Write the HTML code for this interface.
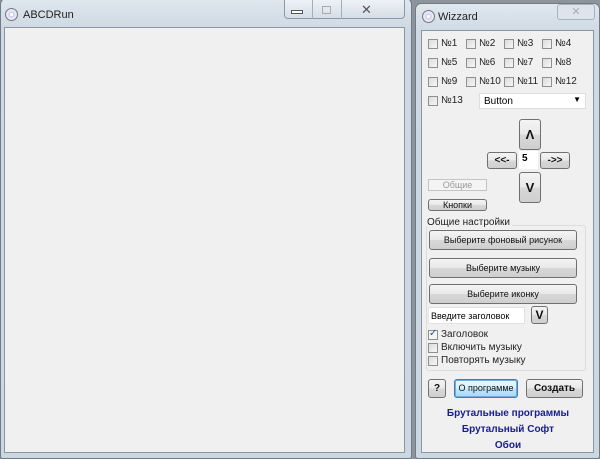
<!DOCTYPE html>
<html><head><meta charset="utf-8"><style>
*{box-sizing:border-box;margin:0;padding:0}
body{width:600px;height:459px;background:#8d949b;position:relative;overflow:hidden;font-family:"Liberation Sans",sans-serif;font-size:10px;color:#000}
.a{position:absolute}
.frame{background:linear-gradient(#dfe7ef,#cfd9e3 30px,#cdd7e1);border:1px solid #707b86;border-radius:6px 6px 3px 3px}
.client{background:#f0f0f0;border:1px solid #8a96a2}
.btn{position:absolute;border:1px solid #707070;border-radius:3px;background:linear-gradient(#f4f4f4,#e8e8e8 50%,#d8d8d8 51%,#cfcfcf);text-align:center;font-size:10px;color:#111}
.cb{position:absolute;width:10px;height:10px;border:1px solid #8e8f8f;background:linear-gradient(135deg,#dcdcdc,#f6f6f6)}
.lbl{position:absolute;font-size:10px;color:#222}
.lnk{position:absolute;left:422px;width:172px;text-align:center;color:#1a2090;font-weight:bold;font-size:10px}
.ico{position:absolute;width:13px;height:13px;border-radius:50%;border:1px solid #777;background:radial-gradient(#fff 20%,#c8cde8 22%,#eef 60%,#aab 100%)}
.sm{font-size:9px}
</style></head><body>
<div class="a frame" style="left:0;top:-2px;width:412px;height:461px"></div>
<div class="ico" style="left:5px;top:8px"></div>
<div class="lbl" style="left:23px;top:9px;font-size:11px">ABCDRun</div>
<div class="a" style="left:284px;top:0;width:121px;height:19px;border:1px solid #8c98a6;border-top:none;border-radius:0 0 4px 4px;background:linear-gradient(#eef2f6,#d5dde6)"></div>
<div class="a" style="left:312px;top:0;width:1px;height:19px;background:#a4aeb9"></div>
<div class="a" style="left:341px;top:0;width:1px;height:19px;background:#a4aeb9"></div>
<div class="a" style="left:291px;top:10px;width:12px;height:4px;border:1px solid #555;background:#fff"></div>
<div class="a" style="left:322px;top:6px;width:9px;height:8px;border:1px solid #aaa"></div>
<div class="a" style="left:361px;top:2px;color:#555;font-size:13px">✕</div>
<div class="a client" style="left:4px;top:27px;width:401px;height:426px"></div>
<div class="a frame" style="left:415px;top:3px;width:185px;height:456px"></div>
<div class="ico" style="left:422px;top:10px"></div>
<div class="lbl" style="left:438px;top:11px;font-size:11px">Wizzard</div>
<div class="a" style="left:557px;top:4px;width:38px;height:16px;border:1px solid #a8b2bd;border-radius:3px;background:#dde4ec;color:#aab;text-align:center;font-size:11px">✕</div>
<div class="a client" style="left:421px;top:30px;width:173px;height:423px"></div>

<div class="cb" style="left:428px;top:39px"></div><div class="lbl" style="left:441px;top:38px">№1</div>
<div class="cb" style="left:466px;top:39px"></div><div class="lbl" style="left:479px;top:38px">№2</div>
<div class="cb" style="left:504px;top:39px"></div><div class="lbl" style="left:517px;top:38px">№3</div>
<div class="cb" style="left:542px;top:39px"></div><div class="lbl" style="left:555px;top:38px">№4</div>
<div class="cb" style="left:428px;top:58px"></div><div class="lbl" style="left:441px;top:57px">№5</div>
<div class="cb" style="left:466px;top:58px"></div><div class="lbl" style="left:479px;top:57px">№6</div>
<div class="cb" style="left:504px;top:58px"></div><div class="lbl" style="left:517px;top:57px">№7</div>
<div class="cb" style="left:542px;top:58px"></div><div class="lbl" style="left:555px;top:57px">№8</div>
<div class="cb" style="left:428px;top:77px"></div><div class="lbl" style="left:441px;top:76px">№9</div>
<div class="cb" style="left:466px;top:77px"></div><div class="lbl" style="left:479px;top:76px">№10</div>
<div class="cb" style="left:504px;top:77px"></div><div class="lbl" style="left:517px;top:76px">№11</div>
<div class="cb" style="left:542px;top:77px"></div><div class="lbl" style="left:555px;top:76px">№12</div>
<div class="cb" style="left:428px;top:96px"></div><div class="lbl" style="left:441px;top:95px">№13</div>
<div class="a" style="left:479px;top:93px;width:107px;height:16px;background:#fff;border:1px solid #ddd;padding:2px 4px">Button<span style="position:absolute;right:4px;top:1px;font-size:8px">▼</span></div>

<div class="btn" style="left:519px;top:119px;width:22px;height:31px;line-height:29px;font-size:13px;font-weight:bold">Λ</div>
<div class="btn" style="left:487px;top:152px;width:30px;height:17px;line-height:15px;font-weight:bold">&lt;&lt;-</div>
<div class="a" style="left:519px;top:151px;width:19px;height:18px;background:#fff;font-weight:bold;padding:2px 3px">5</div>
<div class="btn" style="left:540px;top:152px;width:30px;height:17px;line-height:15px;font-weight:bold">-&gt;&gt;</div>
<div class="btn" style="left:519px;top:172px;width:22px;height:31px;line-height:29px;font-size:13px;font-weight:bold">V</div>

<div class="a sm" style="left:428px;top:179px;width:59px;height:12px;border:1px solid #c4c4c4;background:#f4f4f4;color:#999;text-align:center;line-height:10px">Общие</div>
<div class="btn sm" style="left:428px;top:199px;width:59px;height:12px;line-height:10px">Кнопки</div>

<div class="a" style="left:426px;top:225px;width:160px;height:146px;border:1px solid #dcdcdc;border-radius:3px"></div>
<div class="lbl" style="left:427px;top:217px;background:#f0f0f0;padding-right:2px">Общие настройки</div>
<div class="btn sm" style="left:429px;top:230px;width:148px;height:20px;line-height:18px">Выберите фоновый рисунок</div>
<div class="btn sm" style="left:429px;top:258px;width:148px;height:20px;line-height:18px">Выберите музыку</div>
<div class="btn sm" style="left:429px;top:284px;width:148px;height:20px;line-height:18px">Выберите иконку</div>
<div class="a sm" style="left:428px;top:307px;width:97px;height:17px;background:#fff;border:1px solid #e2e2e2;padding:3px 2px">Введите заголовок</div>
<div class="btn" style="left:531px;top:306px;width:17px;height:18px;line-height:16px;font-size:12px;font-weight:bold">V</div>
<div class="cb" style="left:428px;top:330px;background:#f4f4f4"><span style="position:absolute;left:0;top:-3px;font-size:10px;color:#2a4ea0">✓</span></div><div class="lbl" style="left:441px;top:329px">Заголовок</div>
<div class="cb" style="left:428px;top:343px"></div><div class="lbl" style="left:441px;top:342px">Включить музыку</div>
<div class="cb" style="left:428px;top:356px"></div><div class="lbl" style="left:441px;top:355px">Повторять музыку</div>

<div class="btn" style="left:428px;top:379px;width:18px;height:19px;line-height:17px;font-weight:bold">?</div>
<div class="btn sm" style="left:454px;top:379px;width:64px;height:19px;line-height:17px;border-color:#3c7fb1;box-shadow:inset 0 0 0 1px #7ad;background:linear-gradient(#eaf6fd,#d9f0fc 50%,#bee6fd 51%,#a7d9f5)">О программе</div>
<div class="btn" style="left:526px;top:379px;width:57px;height:19px;line-height:17px;font-weight:bold">Создать</div>

<div class="lnk" style="top:408px">Брутальные программы</div>
<div class="lnk" style="top:424px">Брутальный Софт</div>
<div class="lnk" style="top:440px">Обои</div>
</body></html>
